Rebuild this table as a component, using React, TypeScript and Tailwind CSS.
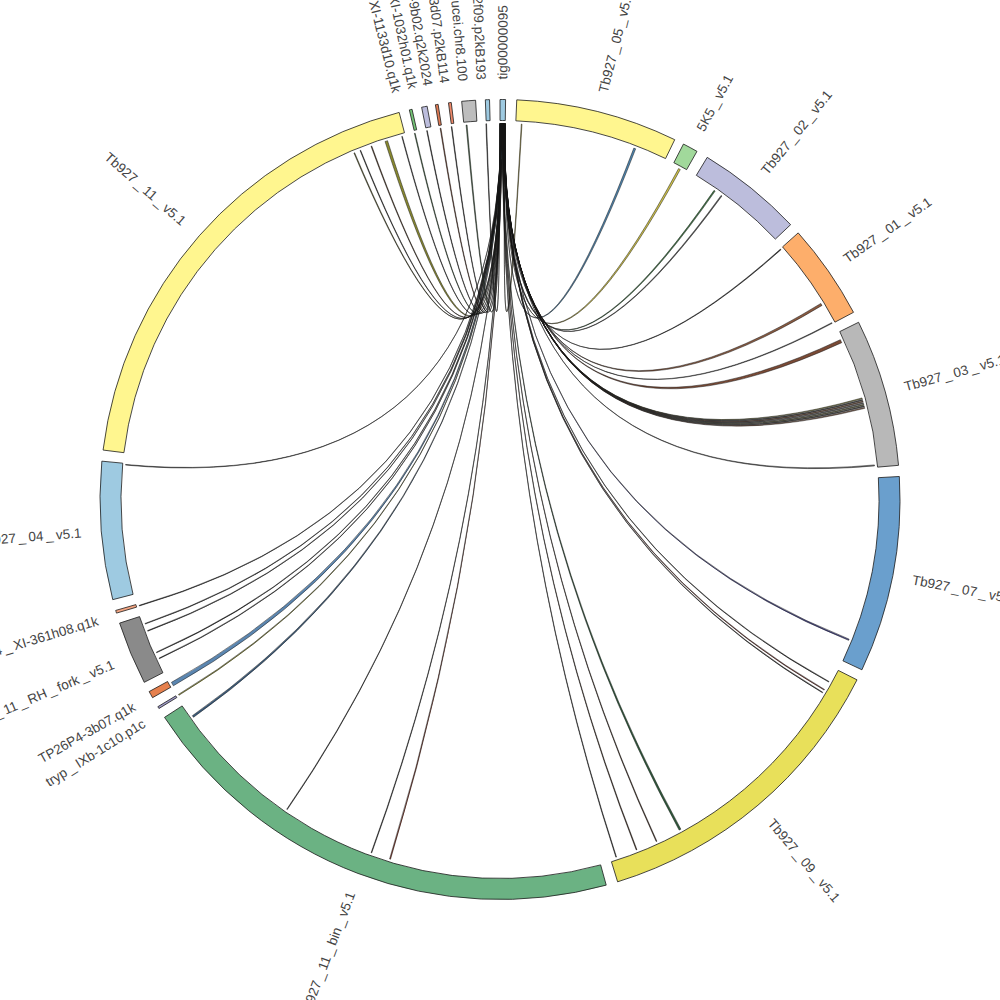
import React from "react";

const CX = 500;
const CY = 499.5;
const R_OUT = 400;
const R_IN = 379;
const R_LINK = 376;
const R_LABEL = 420;

function pt(r: number, deg: number): [number, number] {
  const t = (deg * Math.PI) / 180;
  return [CX + r * Math.sin(t), CY - r * Math.cos(t)];
}
const f = (n: number) => n.toFixed(2);

type Seg = { name: string; a: number; b: number; fill: string; la?: number };

const segs: Seg[] = [
  { name: "tig00000095", a: 0, b: 0.8, fill: "#9ecae1", la: 0.3 },
  { name: "Tb927_05_v5.1", a: 2.4, b: 25.9, fill: "#fff68f" },
  { name: "5K5_v5.1", a: 27.3, b: 29.5, fill: "#a1d99b" },
  { name: "Tb927_02_v5.1", a: 31.2, b: 46.6, fill: "#bcbddc" },
  { name: "Tb927_01_v5.1", a: 48.2, b: 62.1, fill: "#fdae6b" },
  { name: "Tb927_03_v5.1", a: 63.7, b: 85.1, fill: "#b8b8b8" },
  { name: "Tb927_07_v5.1", a: 86.7, b: 115.2, fill: "#6a9fcd" },
  { name: "Tb927_09_v5.1", a: 116.8, b: 162.9, fill: "#e8e05a" },
  { name: "Tb927_11_bin_v5.1", a: 164.6, b: 237.0, fill: "#6bb283" },
  { name: "tryp_IXb-1c10.p1c", a: 238.5, b: 238.8, fill: "#9e9ac8", la: 238.0 },
  { name: "TP26P4-3b07.q1k", a: 240.3, b: 241.3, fill: "#e6804d", la: 240.6 },
  { name: "Tb927_11_RH_fork_v5.1", a: 242.8, b: 252.0, fill: "#8a8a8a", la: 247 },
  { name: "TP26P4_XI-361h08.q1k", a: 253.5, b: 253.9, fill: "#f4a582", la: 253.3 },
  { name: "Tb927_04_v5.1", a: 255.5, b: 275.5, fill: "#9ecae1" },
  { name: "Tb927_11_v5.1", a: 277.1, b: 345.4, fill: "#fff68f" },
  { name: "XI-1133d10.q1k", a: 346.9, b: 347.3, fill: "#74c476", la: 345.8 },
  { name: "XI-1032h01.q1k", a: 348.7, b: 349.5, fill: "#bcbddc", la: 348.1 },
  { name: "TP26P4-9b02.q2k2024", a: 350.7, b: 351.1, fill: "#e07b54", la: 350.2 },
  { name: "TP26P4-3d07.p2kB114", a: 352.6, b: 353.0, fill: "#f08a6a", la: 352.5 },
  { name: "T.brucei.chr8.100", a: 354.5, b: 356.5, fill: "#bdbdbd", la: 355.0 },
  { name: "TP26P4-2f09.p2kB193", a: 357.9, b: 358.5, fill: "#9ecae1", la: 357.5 },
];

// target center, width (deg), fill
const rawLinks: [number, number, string][] = [
  [3.3, 0.1, "#c9b84a"],
  [21.0, 0.3, "#4f86b0"],
  [28.5, 0.3, "#cfc24a"],
  [34.8, 0.2, "#3f7a45"],
  [36.1, 0.15, "#555555"],
  [48.3, 0.12, "#333333"],
  [58.75, 0.35, "#8a5a40"],
  [62.0, 0.12, "#333333"],
  [65.1, 0.5, "#7a4a35"],
  [74.4, 0.14, "#8a8a40"],
  [74.65, 0.14, "#555555"],
  [74.9, 0.14, "#8a6048"],
  [75.15, 0.14, "#555555"],
  [75.4, 0.14, "#7a7a50"],
  [75.65, 0.14, "#555555"],
  [75.9, 0.14, "#8a5a40"],
  [84.8, 0.15, "#777777"],
  [111.9, 0.2, "#4b4b8c"],
  [119.0, 0.1, "#333333"],
  [120.4, 0.12, "#7a2a20"],
  [120.9, 0.1, "#333333"],
  [151.4, 0.3, "#2d5a3a"],
  [155.4, 0.12, "#4a3020"],
  [158.7, 0.12, "#4a3020"],
  [162.0, 0.1, "#333333"],
  [197.0, 0.15, "#8b3a2a"],
  [200.0, 0.1, "#333333"],
  [214.5, 0.1, "#333333"],
  [234.75, 0.3, "#3a5a7a"],
  [238.7, 0.15, "#9a9a40"],
  [240.6, 0.6, "#5b86b0"],
  [245.0, 0.1, "#333333"],
  [246.0, 0.1, "#333333"],
  [249.55, 0.1, "#333333"],
  [250.7, 0.1, "#333333"],
  [253.6, 0.1, "#333333"],
  [275.3, 0.1, "#333333"],
  [337.2, 0.12, "#6a6a30"],
  [338.2, 0.1, "#333333"],
  [340.0, 0.12, "#5a3a20"],
  [342.4, 0.4, "#8a8a30"],
  [344.9, 0.1, "#333333"],
  [346.9, 0.12, "#3a6a3a"],
  [348.8, 0.1, "#333333"],
  [350.9, 0.12, "#7a3a20"],
  [352.6, 0.1, "#333333"],
  [354.9, 0.15, "#4a6a4a"],
  [357.9, 0.1, "#333333"],
];

function segPath(a: number, b: number) {
  const large = b - a > 180 ? 1 : 0;
  const [x1, y1] = pt(R_OUT, a);
  const [x2, y2] = pt(R_OUT, b);
  const [x3, y3] = pt(R_IN, b);
  const [x4, y4] = pt(R_IN, a);
  return `M${f(x1)},${f(y1)} A${R_OUT},${R_OUT} 0 ${large} 1 ${f(x2)},${f(y2)} L${f(x3)},${f(y3)} A${R_IN},${R_IN} 0 ${large} 0 ${f(x4)},${f(y4)} Z`;
}

function ribbon(a1: number, a2: number, b1: number, b2: number) {
  const [p1x, p1y] = pt(R_LINK, a1);
  const [p2x, p2y] = pt(R_LINK, b2);
  const [p3x, p3y] = pt(R_LINK, b1);
  const [p4x, p4y] = pt(R_LINK, a2);
  return `M${f(p1x)},${f(p1y)} Q${CX},${CY} ${f(p2x)},${f(p2y)} A${R_LINK},${R_LINK} 0 0 0 ${f(p3x)},${f(p3y)} Q${CX},${CY} ${f(p4x)},${f(p4y)} A${R_LINK},${R_LINK} 0 0 0 ${f(p1x)},${f(p1y)} Z`;
}

const sortedLinks = [...rawLinks].sort((p, q) => p[0] - q[0]);
const N = sortedLinks.length;
const links = sortedLinks.map(([c, w, color], i) => {
  const aCenter = 0.82 - (i * 0.84) / (N - 1);
  const aw = Math.max(0.02, w * 0.08);
  return {
    d: ribbon(aCenter - aw / 2 + 360, aCenter + aw / 2 + 360, c - w / 2, c + w / 2),
    color,
  };
});

function Label({ seg }: { seg: Seg }) {
  const mid = seg.la !== undefined ? seg.la : (seg.a + seg.b) / 2;
  let s = mid % 360;
  if (s > 180) s -= 360;
  const right = s >= 0;
  const [x, y] = pt(R_LABEL, mid);
  const rot = right ? s - 90 : s + 90;
  const parts = seg.name.split("_");
  return (
    <text
      x={f(x)}
      y={f(y)}
      transform={`rotate(${rot.toFixed(2)} ${f(x)} ${f(y)})`}
      textAnchor={right ? "start" : "end"}
      dominantBaseline="central"
      fontSize={13.5}
      fill="#444444"
      fontFamily="'Liberation Sans', Arial, sans-serif"
    >
      {parts.map((p, i) =>
        i === 0 ? (
          <tspan key={i}>{p}</tspan>
        ) : (
          <React.Fragment key={i}>
            <tspan dx={2.5}>_</tspan>
            <tspan dx={2.5}>{p}</tspan>
          </React.Fragment>
        )
      )}
    </text>
  );
}

export default function App() {
  return (
    <div className="w-[1000px] h-[1000px] bg-white overflow-hidden">
      <svg width={1000} height={1000} viewBox="0 0 1000 1000" className="block">
        <g>
          {links.map((l, i) => (
            <path key={i} d={l.d} fill={l.color} stroke="#151515" strokeWidth={0.5} strokeLinejoin="round" />
          ))}
        </g>
        <g>
          {segs.map((s) => (
            <path key={s.name} d={segPath(s.a, s.b)} fill={s.fill} stroke="#1a1a1a" strokeWidth={0.8} />
          ))}
        </g>
        <g>
          {segs.map((s) => (
            <Label key={s.name} seg={s} />
          ))}
        </g>
      </svg>
    </div>
  );
}
